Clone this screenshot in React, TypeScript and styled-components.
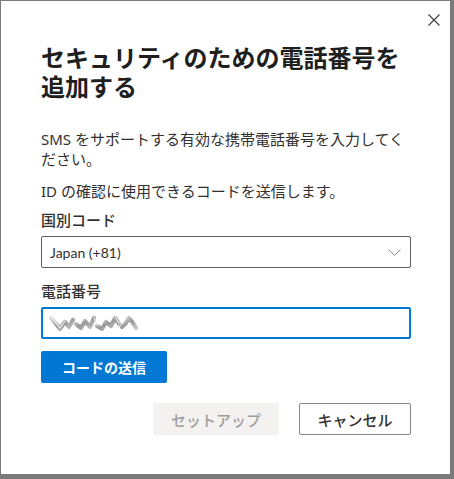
import React from "react";
import styled, { createGlobalStyle } from "styled-components";

const Global = createGlobalStyle`
  html, body { margin: 0; padding: 0; }
  body {
    background: #7a7a7a;
    font-family: "Noto Sans", "Noto Sans CJK JP", sans-serif;
    color: #323130;
  }
`;

const Page = styled.div`
  width: 454px;
  height: 479px;
  padding: 1px 0 0 1px;
  box-sizing: border-box;
`;

const Dialog = styled.div`
  width: 449px;
  height: 473px;
  background: #ffffff;
  box-sizing: border-box;
  display: flex;
  flex-direction: column;
  padding: 0 39px 0 40px;
`;

const TopBar = styled.div`
  height: 41px;
  display: flex;
  justify-content: flex-end;
  align-items: flex-start;
  margin-right: -39px;
`;

const CloseButton = styled.button`
  width: 32px;
  height: 32px;
  margin: 3px 0 0 0;
  padding: 0;
  border: none;
  background: transparent;
  display: flex;
  align-items: center;
  justify-content: center;
  cursor: pointer;
`;

const Title = styled.h1`
  margin: 0;
  font-family: "Noto Sans CJK JP", sans-serif;
  font-size: 24px;
  line-height: 29px;
  font-weight: 600;
  color: #201f1e;
`;

const Paragraph = styled.p<{ $top: number }>`
  margin: ${(p) => p.$top}px 0 0 0;
  font-family: "Noto Sans", "Noto Sans CJK JP", sans-serif;
  font-size: 15px;
  line-height: 20px;
  color: #323130;
`;

const Label = styled.label<{ $top: number }>`
  display: block;
  margin-top: ${(p) => p.$top}px;
  font-family: "Noto Sans", "Noto Sans CJK JP", sans-serif;
  font-size: 15px;
  line-height: 20px;
  font-weight: 500;
  color: #323130;
`;

const SelectBox = styled.div`
  margin-top: 6px;
  height: 32px;
  box-sizing: border-box;
  border: 1px solid #605e5c;
  border-radius: 2px;
  display: flex;
  align-items: center;
  justify-content: space-between;
  padding: 0 9px 0 8px;
  font-family: "Lato", "Noto Sans", sans-serif;
  font-size: 14px;
  color: #323130;
`;

const Field = styled.div`
  margin-top: 6px;
  height: 32px;
  box-sizing: border-box;
  border: 2px solid #0078d4;
  border-radius: 2px;
  display: flex;
  align-items: center;
  padding: 0 4px;
`;

const PrimaryButton = styled.button`
  margin-top: 12px;
  align-self: flex-start;
  width: 126px;
  height: 32px;
  border: none;
  border-radius: 2px;
  background: #0078d4;
  color: #ffffff;
  font-family: "Noto Sans CJK JP", sans-serif;
  font-size: 14px;
  font-weight: 700;
  padding: 0;
`;

const Footer = styled.div`
  margin-top: 20px;
  display: flex;
  justify-content: flex-end;
  gap: 20px;
`;

const FooterButton = styled.button<{ $variant: "disabled" | "default"; $w: number }>`
  width: ${(p) => p.$w}px;
  height: 32px;
  box-sizing: border-box;
  border-radius: 2px;
  padding: 0;
  font-family: "Noto Sans CJK JP", sans-serif;
  font-size: 15px;
  font-weight: 500;
  border: 1px solid ${(p) => (p.$variant === "disabled" ? "#f3f2f1" : "#8a8886")};
  background: ${(p) => (p.$variant === "disabled" ? "#f3f2f1" : "#ffffff")};
  color: ${(p) => (p.$variant === "disabled" ? "#a19f9d" : "#323130")};
`;

const Redacted = () => (
  <svg width="92" height="18" viewBox="0 0 92 18">
    <defs>
      <linearGradient id="g" x1="0" y1="0" x2="1" y2="1">
        <stop offset="0" stopColor="#dcdcdc" />
        <stop offset="0.5" stopColor="#9a9a9a" />
        <stop offset="1" stopColor="#c8c8c8" />
      </linearGradient>
    </defs>
    <g fill="none" stroke="url(#g)" strokeWidth="4.2" strokeLinejoin="round" strokeLinecap="round">
      <path d="M4 4 L9 10 L13 15 L18 8 L22 13 L26 6" />
      <path d="M29 10 L34 14 L38 7 L43 13 L47 4" />
      <path d="M50 12 L55 15 L59 8 L64 12 L68 4 L72 10" />
      <path d="M75 13 L79 9 L82 4 L86 9 L89 14" />
    </g>
    <g fill="none" stroke="#ececec" strokeWidth="1.2" strokeLinecap="round">
      <path d="M4 3 L9 9 L13 14 L18 7" />
      <path d="M47 3 L50 11" />
      <path d="M68 3 L72 9" />
    </g>
  </svg>
);

export default function App() {
  return (
    <>
      <Global />
      <Page>
        <Dialog>
          <TopBar>
            <CloseButton aria-label="閉じる">
              <svg width="12" height="12" viewBox="0 0 12 12">
                <path d="M0.5 0.5 L11.5 11.5 M11.5 0.5 L0.5 11.5" stroke="#3b3a39" strokeWidth="1.1" />
              </svg>
            </CloseButton>
          </TopBar>
          <Title>セキュリティのための電話番号を追加する</Title>
          <Paragraph $top={29}>
            SMS をサポートする有効な携帯電話番号を入力してください。
          </Paragraph>
          <Paragraph $top={12}>ID の確認に使用できるコードを送信します。</Paragraph>
          <Label $top={9}>国別コード</Label>
          <SelectBox>
            <span>Japan (+81)</span>
            <svg width="13" height="7" viewBox="0 0 13 7">
              <path d="M0.5 0.5 L6.5 6.5 L12.5 0.5" fill="none" stroke="#8a8886" strokeWidth="1" />
            </svg>
          </SelectBox>
          <Label $top={13}>電話番号</Label>
          <Field>
            <Redacted />
          </Field>
          <PrimaryButton>コードの送信</PrimaryButton>
          <Footer>
            <FooterButton $variant="disabled" $w={126} disabled>
              セットアップ
            </FooterButton>
            <FooterButton $variant="default" $w={112}>
              キャンセル
            </FooterButton>
          </Footer>
        </Dialog>
      </Page>
    </>
  );
}
